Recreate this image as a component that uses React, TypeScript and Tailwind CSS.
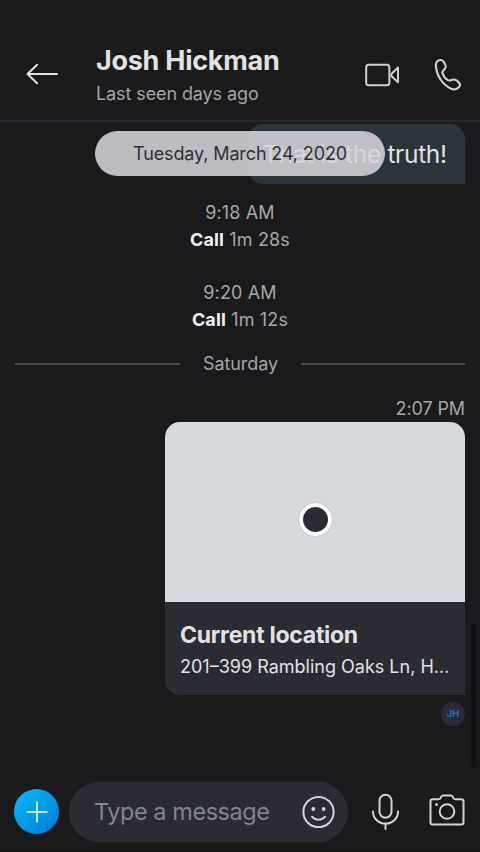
import React from "react";

const stroke = {
  fill: "none",
  stroke: "currentColor",
  strokeWidth: 2,
  strokeLinecap: "round" as const,
  strokeLinejoin: "round" as const,
};

function BackIcon() {
  return (
    <svg width="34" height="22" viewBox="0 0 34 22" {...stroke}>
      <path d="M32 11H2.500M12 1.700 2.500 11l9.500 9.200" />
    </svg>
  );
}

function VideoIcon() {
  return (
    <svg width="36" height="24" viewBox="0 0 36 24" {...stroke}>
      <rect x="2.200" y="1.700" width="23.200" height="20.600" rx="2.600" />
      <path d="M34 4.500v14.800l-5.900-5.600a2.200 2.200 0 0 1 0-3.400z" />
    </svg>
  );
}

function PhoneIcon() {
  return (
    <svg width="28" height="34" viewBox="-0.500 -0.500 29 35" {...stroke} strokeWidth={2.200}>
      <path d="M3.100 2.500C5 1 7.900 1 9.200 2.800C10.800 5 12.200 7.600 11.300 9.700C10.500 11.700 7.600 12.600 8.300 14.900C9.200 18.100 11.100 20.700 13.800 22.300C16 23.500 17.500 21.700 19.800 21.600C22.100 21.500 24.300 23.500 25.700 25.300C27 27.100 26.200 28.900 24.600 30.200C22.700 31.900 20 32.300 17.300 31.200C8.600 27.300 2 17.800 1.400 7C1.300 5.100 1.700 3.500 3.100 2.500Z" />
    </svg>
  );
}

function SmileIcon() {
  return (
    <svg width="34" height="34" viewBox="0 0 34 34" {...stroke}>
      <circle cx="17.500" cy="17" r="15.100" />
      <circle cx="12.300" cy="14" r="1.900" fill="currentColor" stroke="none" />
      <circle cx="22.700" cy="14" r="1.900" fill="currentColor" stroke="none" />
      <path d="M11 21.700c3.300 4 9.700 4 13 0" />
    </svg>
  );
}

function MicIcon() {
  return (
    <svg width="28" height="38" viewBox="0 0 28 38" {...stroke}>
      <rect x="7.500" y="1.700" width="12" height="23" rx="6" />
      <path d="M1 18.500c0 7.100 5.600 12 12.500 12s12.500-4.900 12.500-12M13.500 30.500V36" />
    </svg>
  );
}

function CameraIcon() {
  return (
    <svg width="36" height="32" viewBox="0 0 36 32" {...stroke}>
      <path d="M3.800 5.300H9.400Q11.500 5.300 11.900 3.600Q12.400 1.400 14.300 1.400H21.700Q23.600 1.400 24.100 3.600Q24.500 5.300 26.600 5.300H32.200Q34.500 5.300 34.500 7.600V28.200Q34.500 30.500 32.200 30.500H3.800Q1.500 30.500 1.500 28.200V7.600Q1.500 5.300 3.800 5.300Z" />
      <circle cx="18" cy="17.500" r="7.300" />
      <circle cx="7.500" cy="10.500" r="1.500" fill="currentColor" stroke="none" />
    </svg>
  );
}

function Call({ time, length }: { time: string; length: string }) {
  return (
    <div className="h-[80px] text-center text-[18px] text-[#a6a6a8]">
      <div className="h-[27px] leading-7 tracking-[0.150px]">{time}</div>
      <div className="leading-7 tracking-[0.150px]">
        <span className="font-bold text-[#f0f0f2]">Call</span> {length}
      </div>
    </div>
  );
}

export default function App() {
  return (
    <div className="relative flex h-[852px] w-[480px] flex-col overflow-hidden bg-[#1a1a1c] font-['Inter',sans-serif] text-[#e1e1e3]">
      <header className="flex h-[122px] shrink-0 items-start border-b-2 border-[#29292d] pt-[44px]">
        <button aria-label="Back" className="ml-[25px] mt-[19px]">
          <BackIcon />
        </button>
        <div className="ml-[37px] w-[268px] whitespace-nowrap">
          <h1 className="text-[27px] font-bold leading-[34px] tracking-[-0.280px]">Josh Hickman</h1>
          <p className="pt-px text-[18px] leading-[30px] tracking-[-0.100px] text-[#a4a4a6]">Last seen days ago</p>
        </div>
        <button aria-label="Video call" className="mt-[19px] text-[#d0d0d1]">
          <VideoIcon />
        </button>
        <button aria-label="Call" className="ml-[34px] mt-[14px] text-[#d0d0d1]">
          <PhoneIcon />
        </button>
      </header>

      <main className="relative h-[648px] shrink-0 px-[15px] pt-[2px]">
        <div className="ml-auto flex h-[60px] w-[217px] items-center whitespace-nowrap rounded-[15px] rounded-br-none bg-[#2b333b] pl-[15px] text-[24.500px] tracking-[-0.330px]">
          That is the truth!
        </div>
        <div className="absolute left-[95px] top-[8.500px] flex h-[45.500px] w-[290px] items-center justify-center whitespace-nowrap rounded-full bg-[#d6d5da]/87 text-[18px] tracking-[-0.120px] text-[#303036]">
          Tuesday, March 24, 2020
        </div>

        <section className="mt-[15px]">
          <Call time="9:18 AM" length="1m 28s" />
          <Call time="9:20 AM" length="1m 12s" />
        </section>

        <div className="-mt-[10px] flex h-[28px] items-center text-[18px] text-[#a6a6a8]">
          <div className="mt-px h-[2px] w-[165px] bg-[#48484a]" />
          <span className="w-[121px] text-center tracking-[-0.100px]">Saturday</span>
          <div className="mt-px h-[2px] w-[164px] bg-[#48484a]" />
        </div>

        <div className="mt-[18px] h-[27px] text-right text-[18px] leading-7 tracking-[-0.100px] text-[#a6a6a8]">2:07 PM</div>
        <article className="ml-auto h-[273px] w-[300px] overflow-hidden rounded-[15px] rounded-br-none bg-[#2b2b33]">
          <div className="flex h-[180px] items-center justify-center bg-[#d6d9de] pt-[15px]">
            <div className="size-[33px] rounded-full border-[4.500px] border-white bg-[#2b2b33] shadow-[0_0_1px_#777]" />
          </div>
          <div className="whitespace-nowrap px-[15px] pt-[17px]">
            <h2 className="text-[23px] font-bold leading-8 tracking-[-0.260px]">Current location</h2>
            <p className="text-[18px] leading-[31px]">201–399 Rambling Oaks Ln, H...</p>
          </div>
        </article>
        <div className="ml-auto mt-[7px] flex size-[24px] items-center justify-center rounded-full bg-[#2b2b33] pt-px text-[9.500px] font-bold text-[#1477c6]">
          JH
        </div>
        <div className="absolute right-[4px] top-[501px] h-[144px] w-[5px] rounded-full bg-[#121213]" />
      </main>

      <footer className="flex h-[82px] items-center border-b-2 border-[#131314] pl-[14px] text-[#d3d3d5]">
        <button aria-label="Add" className="mt-[3px] flex size-[45px] items-center justify-center rounded-full bg-linear-to-br from-[#00bdf2] to-[#0078d9] text-white">
          <svg width="22" height="22" viewBox="0 0 22 22" fill="none" stroke="currentColor" strokeWidth="1.500">
            <path d="M11 .5v21M.5 11h21" />
          </svg>
        </button>
        <div className="ml-[10px] mt-[3px] flex h-[60px] w-[279px] items-center rounded-full bg-[#2b2b33] pl-[25px]">
          <span className="w-[207px] whitespace-nowrap text-[23.500px] tracking-[-0.450px] text-[#838389]">Type a message</span>
          <SmileIcon />
        </div>
        <button aria-label="Voice message" className="ml-[24px] mt-[3px]">
          <MicIcon />
        </button>
        <button aria-label="Camera" className="ml-[29px]">
          <CameraIcon />
        </button>
      </footer>
    </div>
  );
}
